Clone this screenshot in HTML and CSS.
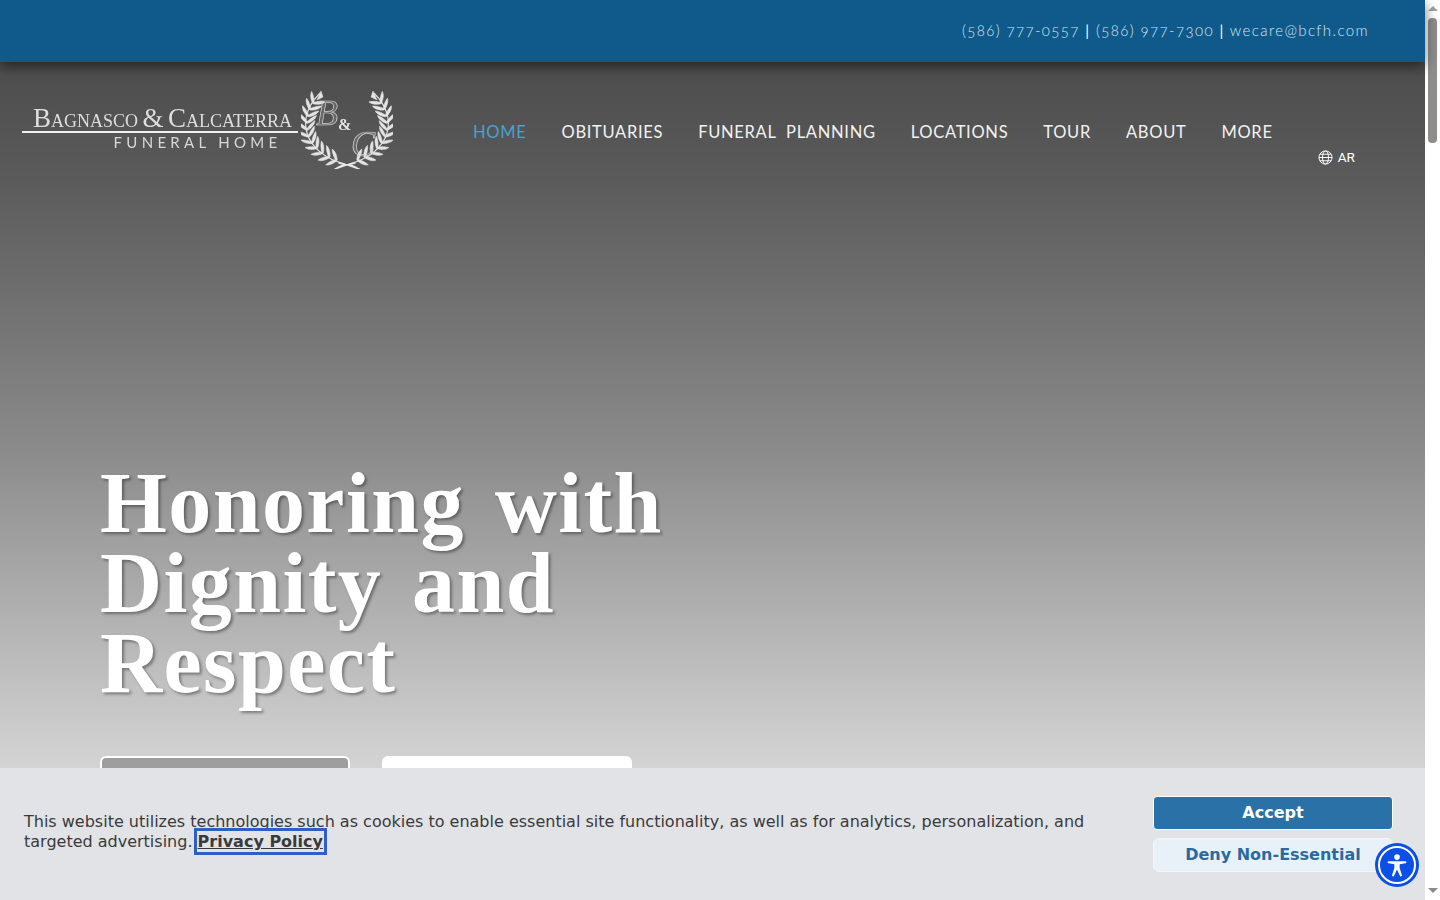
FILE: index.html
```html
<!DOCTYPE html>
<html lang="en">
<head>
<meta charset="utf-8">
<title>Bagnasco &amp; Calcaterra Funeral Home</title>
<link rel="stylesheet" href="styles.css">
</head>
<body>
<div class="window">
  <main class="page">
    <div class="topbar">
      <span class="contact">(586) 777-0557 <b class="sep">|</b> (586) 977-7300 <b class="sep">|</b> wecare@bcfh.com</span>
    </div>
    <section class="hero">
      <header class="navrow">
        <a class="logo" href="#">
          <span class="logo-text">
            <span class="logo-name"><span class="cap">B</span>AGNASCO <span class="amp">&amp;</span> <span class="cap">C</span>ALCATERRA</span>
            <span class="logo-rule"></span>
            <span class="logo-sub">FUNERAL HOME</span>
          </span>
          <span class="crest">
            <svg class="wreath" width="92" height="78" viewBox="0 0 92 78">
              <defs>
                <path id="pair" d="M0 1.500C-2-1-5-4-8.500-5.500C-8-2-4.500 1.500 0 3.500C4.500 1.500 8-2 8.500-5.500C5-4 2-1 0 1.500z"/>
                <g id="branch">
                  <path d="M19 2C7 14 2 28 6 42 10 56 24 68 44 73" fill="none" stroke="#e2e2e2" stroke-width="1.200"/>
                  <path d="M20 0 16 9 22 6z"/>
                  <use href="#pair" transform="translate(14 10) rotate(38)"/>
                  <use href="#pair" transform="translate(10.500 16) rotate(28)"/>
                  <use href="#pair" transform="translate(8 22.500) rotate(18)"/>
                  <use href="#pair" transform="translate(6.500 29) rotate(6)"/>
                  <use href="#pair" transform="translate(6 36) rotate(-6)"/>
                  <use href="#pair" transform="translate(7 43) rotate(-18)"/>
                  <use href="#pair" transform="translate(10 49.500) rotate(-30)"/>
                  <use href="#pair" transform="translate(14 55) rotate(-42)"/>
                  <use href="#pair" transform="translate(19.500 60) rotate(-52)"/>
                  <use href="#pair" transform="translate(26 64.500) rotate(-60)"/>
                  <use href="#pair" transform="translate(33 68) rotate(-68)"/>
                </g>
              </defs>
              <g fill="#e4e4e4" stroke="#e4e4e4" stroke-width=".5">
                <use href="#branch"/>
                <use href="#branch" transform="translate(92 0) scale(-1 1)"/>
              </g>
              <path d="M38 72C43 73 49 74 58 78M54 72C49 73 43 74 34 78M42 74 36 77M50 74 56 77" fill="none" stroke="#e6e6e6" stroke-width="1.700" stroke-linecap="round"/>
            </svg>
            <span class="mono mono-b">B</span>
            <span class="mono mono-amp">&amp;</span>
            <span class="mono mono-c">C</span>
          </span>
        </a>
        <nav class="nav">
          <a class="nav-link is-active" href="#">HOME</a>
          <a class="nav-link" href="#">OBITUARIES</a>
          <a class="nav-link" href="#">FUNERAL PLANNING</a>
          <a class="nav-link" href="#">LOCATIONS</a>
          <a class="nav-link" href="#">TOUR</a>
          <a class="nav-link" href="#">ABOUT</a>
          <a class="nav-link" href="#">MORE</a>
        </nav>
        <a class="lang" href="#">
          <svg width="15" height="15" viewBox="0 0 16 16" fill="none" stroke="#fff" stroke-width="1">
            <circle cx="8" cy="8" r="7"/>
            <ellipse cx="8" cy="8" rx="3.200" ry="7"/>
            <path d="M1 8h14M2 4.500h12M2 11.500h12"/>
          </svg>
          <span>AR</span>
        </a>
      </header>
      <div class="hero-body">
        <h1 class="headline">Honoring with Dignity and Respect</h1>
        <div class="hero-actions">
          <span class="btn btn-ghost"></span>
          <span class="btn btn-solid"></span>
        </div>
      </div>
    </section>
  </main>
  <aside class="scrollbar">
    <span class="arrow arrow-up"></span>
    <span class="track"><span class="thumb"></span></span>
    <span class="arrow arrow-down"></span>
  </aside>
</div>
<div class="cookie">
  <p class="cookie-text">This website utilizes technologies such as cookies to enable essential site functionality, as well as for analytics, personalization, and targeted advertising. <a class="policy" href="#">Privacy Policy</a></p>
  <div class="cookie-actions">
    <button class="cookie-btn accept">Accept</button>
    <button class="cookie-btn deny">Deny Non-Essential</button>
  </div>
</div>
<button class="a11y" aria-label="Accessibility">
  <svg width="20" height="23" viewBox="0 0 22 26" fill="#fff">
    <circle cx="11" cy="3.500" r="3.200"/>
    <path d="M1.500 8.200h19a1.100 1.100 0 0 1 0 2.200L14 11.600v4.200l2.600 8.200a1.200 1.200 0 0 1-2.200.8L11 17.600 7.600 24.800a1.200 1.200 0 0 1-2.200-.8L8 15.800V11.600L1.500 10.400a1.100 1.100 0 0 1 0-2.200z"/>
  </svg>
</button>
</body>
</html>
```
FILE: styles.css
```css
* { box-sizing: border-box; }
html, body { margin: 0; height: 100%; overflow: hidden; }
body { font-family: "DejaVu Sans", sans-serif; background: #fff; }
a { text-decoration: none; color: inherit; }

.window { display: flex; height: 900px; }
.page { flex: 1; min-width: 0; display: flex; flex-direction: column; }

.topbar {
  height: 62px; flex: none; background: #0f5a8a;
  display: flex; align-items: center; justify-content: flex-end;
  padding: 0 56px 2px 0; position: relative; z-index: 2;
  box-shadow: 0 4px 12px rgba(0,0,0,.55);
}
.contact { font-family: "Lato", sans-serif; font-weight: 300; font-size: 15px; letter-spacing: 1.400px; color: #d8e6f0; font-variant-numeric: oldstyle-nums; white-space: nowrap; }
.sep { font-weight: 400; color: #fff; }

.hero {
  flex: 1; min-height: 0; display: flex; flex-direction: column;
  background: linear-gradient(180deg, #4c4c4c 0%, #5a5a5a 13.500%, #8a8a8a 46%, #d0d0d0 82%, #e6e6e6 100%);
}
.navrow { display: flex; align-items: flex-start; height: 130px; padding: 29px 0 0 22px; flex: none; }
.logo { display: flex; align-items: flex-start; width: 371px; flex: none; color: #dedede; filter: blur(.3px); }
.logo-text { width: 276px; flex: none; display: flex; flex-direction: column; align-items: center; padding-top: 14px; }
.logo-name { display: block; height: 26px; padding-left: 5px; font-family: "Liberation Serif", serif; font-size: 18px; line-height: 26px; white-space: nowrap; letter-spacing: 0; }
.cap { font-size: 27px; }
.amp { font-size: 27px; }
.logo-rule { display: block; width: 100%; height: 2px; flex: none; background: #f0f0f0; }
.logo-sub { font-family: "Lato", sans-serif; font-size: 15px; line-height: 18px; letter-spacing: 4.300px; padding-left: 75px; white-space: nowrap; color: #d8d8d8; }
.crest { position: relative; width: 92px; height: 78px; flex: none; margin-left: 3px; }
.wreath { display: block; }
.mono { position: absolute; font-family: "Liberation Serif", serif; font-style: italic; line-height: 1; color: rgba(255,255,255,.12); -webkit-text-stroke: .7px #d4d4d4; }
.mono-b { left: 15px; top: 4px; font-size: 36px; }
.mono-amp { left: 37px; top: 26px; font-size: 16px; color: #e6e6e6; font-weight: 700; font-style: normal; -webkit-text-stroke: 0; }
.mono-c { left: 50px; top: 35px; font-size: 36px; }

.nav { display: flex; gap: 35px; margin-left: 80px; padding-top: 29px; }
.nav-link { font-family: "Lato", sans-serif; font-size: 16.500px; line-height: 24px; letter-spacing: .7px; word-spacing: 5px; color: #f2f2f2; white-space: nowrap; }
.is-active { color: #4ba0d0; }
.lang { display: flex; align-items: center; gap: 5px; margin-left: 45px; margin-top: 58px; font-family: "Roboto", sans-serif; font-size: 13.500px; line-height: 16px; color: #fff; }

.hero-body { padding: 271px 0 0 100px; }
.headline {
  margin: 0; width: 620px; font-family: "Liberation Serif", serif; font-weight: 700;
  font-size: 86px; line-height: 80px; color: #fff; letter-spacing: 1.400px; word-spacing: 7px;
  text-shadow: 2px 2px 3px rgba(0,0,0,.38);
}
.hero-actions { display: flex; gap: 32px; margin-top: 53px; }
.btn { display: block; width: 250px; height: 60px; border-radius: 6px; }
.btn-ghost { background: #9e9e9e; border: 2px solid #fff; }
.btn-solid { background: #fff; }

.scrollbar { width: 15px; flex: none; background: #fff; display: flex; flex-direction: column; align-items: center; }
.arrow { width: 0; height: 0; flex: none; border-left: 5px solid transparent; border-right: 5px solid transparent; }
.arrow-up { border-bottom: 5px solid #a3a3a3; margin: 6px 0 7px; }
.arrow-down { border-top: 5px solid #8a8a8a; margin: 3px 0 7px; }
.track { flex: 1; width: 100%; padding: 0 3px; }
.thumb { display: block; height: 125px; border-radius: 4px; background: #8f8c8c; }

.cookie {
  position: fixed; left: 0; bottom: 0; width: 1425px; height: 132px;
  background: #e2e3e6; display: flex; align-items: flex-start; justify-content: space-between;
  padding: 28px 32px 0 24px; z-index: 5;
}
.cookie-text { margin: 16px 0 0; width: 1075px; font-size: 16px; line-height: 20px; color: #3a3a3c; }
.policy { color: #3a3a3c; font-weight: 700; text-decoration: underline; outline: 3px solid #2f5fc4; outline-offset: 1px; }
.cookie-actions { width: 240px; display: flex; flex-direction: column; gap: 8px; }
.cookie-btn { font-family: "DejaVu Sans", sans-serif; font-weight: 700; font-size: 16px; width: 240px; border-radius: 4px; cursor: pointer; padding: 0 0 2px; }
.accept { height: 34px; background: #2a71a8; color: #fff; border: 1px solid #fff; }
.deny { height: 34px; background: #e9f1f8; color: #2a6a9e; border: 1px solid #f3f6fa; border-radius: 6px; }

.a11y {
  position: fixed; left: 1375px; top: 843px; width: 44px; height: 44px; border-radius: 50%;
  background: #0b4fe6; border: 0; padding: 0; z-index: 6; display: flex; align-items: center; justify-content: center;
}
.a11y::after { content: ""; position: absolute; inset: 3px; border: 2px solid #fff; border-radius: 50%; }
```
